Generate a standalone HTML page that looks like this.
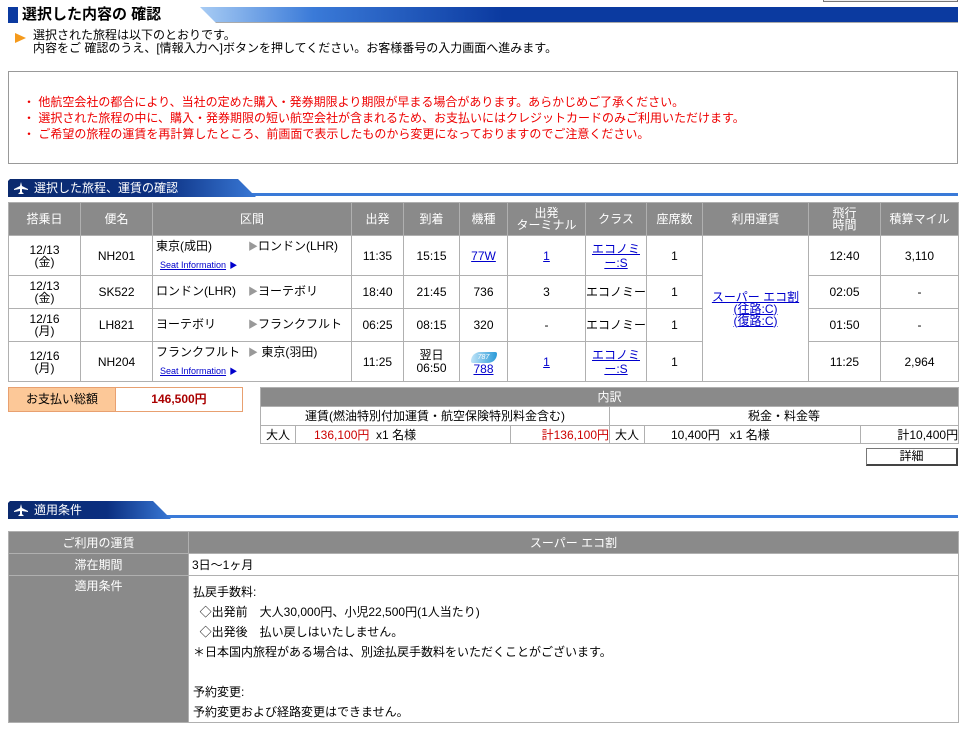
<!DOCTYPE html>
<html><head><meta charset="utf-8"><style>
*{margin:0;padding:0;box-sizing:border-box}
body{width:966px;height:731px;background:#fff;font-family:"Liberation Sans","Noto Sans CJK JP",sans-serif;font-size:12px;color:#000;position:relative;overflow:hidden}
.abs{position:absolute}
table{border-collapse:collapse;table-layout:fixed}
td,th{border:1px solid #b0b0b0;text-align:center;vertical-align:middle;font-weight:normal;line-height:14px}
th{background:#8a8a8a;color:#fff}
a{color:#00c;text-decoration:underline}
.red{color:#c00}
.sec{position:absolute;left:8px;height:18px;width:950px}
.sec .tab{position:absolute;left:0;top:0;height:18px;width:250px;background:linear-gradient(90deg,#0b2a6e 0%,#0b2f80 60%,#3a7ad8 100%);clip-path:polygon(0 2px,2px 0,230px 0,248px 18px,0 18px);color:#fff;font-size:12px;line-height:18px;padding-left:26px}
.sec .line{position:absolute;left:240px;right:0;top:14px;height:3px;background:#3a7ad8}
.plane{position:absolute;left:6px;top:3px;width:14px;height:12px}
.p1{display:inline-block;width:92px;white-space:nowrap}
.rt{text-align:left;padding-left:3px;white-space:nowrap}
.ar{color:#999;font-size:10px}
</style></head><body>
<div class="abs" style="left:823px;top:0;width:135px;height:2px;border:1px solid #777;border-top:none;background:#eee"></div>
<div class="abs" style="left:8px;top:7px;width:10px;height:16px;background:#0b3aa0"></div>
<div class="abs" style="left:22px;top:6px;font-size:15px;font-weight:bold;line-height:18px">選択した内容の 確認</div>
<div class="abs" style="left:200px;top:7px;width:758px;height:16px;background:linear-gradient(90deg,#a8ccf4 0%,#3a7ad8 15%,#0b3aa0 40%,#0b3aa0 100%);clip-path:polygon(0 0,100% 0,100% 100%,16px 100%);border-bottom:1px solid #aaa"></div>
<div class="abs" style="left:15px;top:33px;width:0;height:0;border-top:5px solid transparent;border-bottom:5px solid transparent;border-left:11px solid #f59a1c"></div>
<div class="abs" style="left:33px;top:29px;line-height:13px">選択された旅程は以下のとおりです。<br>内容をご 確認のうえ、[情報入力へ]ボタンを押してください。お客様番号の入力画面へ進みます。</div>
<div class="abs" style="left:8px;top:71px;width:950px;height:93px;border:1px solid #999;padding:22px 0 0 14px;color:#e00;line-height:16px">・ 他航空会社の都合により、当社の定めた購入・発券期限より期限が早まる場合があります。あらかじめご了承ください。<br>・ 選択された旅程の中に、購入・発券期限の短い航空会社が含まれるため、お支払いにはクレジットカードのみご利用いただけます。<br>・ ご希望の旅程の運賃を再計算したところ、前画面で表示したものから変更になっておりますのでご注意ください。</div>

<div class="sec" style="top:179px"><div class="line"></div><div class="tab"><svg class="plane" viewBox="0 0 14 12"><path d="M7 0L8 4L14 7L14 8L8 7L8 10L10 12L4 12L6 10L6 7L0 8L0 7L6 4Z" fill="#fff"/></svg>選択した旅程、運賃の確認</div></div>

<table class="abs" style="left:8px;top:202px;width:950px">
<colgroup><col style="width:72px"><col style="width:72px"><col style="width:199px"><col style="width:52px"><col style="width:56px"><col style="width:48px"><col style="width:78px"><col style="width:61px"><col style="width:56px"><col style="width:106px"><col style="width:72px"><col style="width:78px"></colgroup>
<tr style="height:33px"><th>搭乗日</th><th>便名</th><th>区間</th><th>出発</th><th>到着</th><th>機種</th><th style="line-height:12px">出発<br>ターミナル</th><th>クラス</th><th>座席数</th><th>利用運賃</th><th style="line-height:12px">飛行<br>時間</th><th>積算マイル</th></tr>
<tr style="height:40px"><td style="line-height:12px">12/13<br>(金)</td><td>NH201</td><td class="rt" style="line-height:16px"><span class="p1">東京(成田)</span><span class="ar">▶</span>ロンドン(LHR)<br><a style="font-size:9px;margin-left:4px">Seat Information</a> <span style="font-size:8px;color:#00c">▶</span></td><td>11:35</td><td>15:15</td><td><a>77W</a></td><td><a>1</a></td><td><a style="line-height:13px">エコノミ<br>ー:S</a></td><td>1</td><td rowspan="4" style="line-height:12px"><a>スーパー エコ割<br>(往路:C)<br>(復路:C)</a></td><td>12:40</td><td>3,110</td></tr>
<tr style="height:33px"><td style="line-height:12px">12/13<br>(金)</td><td>SK522</td><td class="rt"><span class="p1">ロンドン(LHR)</span><span class="ar">▶</span>ヨーテボリ</td><td>18:40</td><td>21:45</td><td>736</td><td>3</td><td>エコノミー</td><td>1</td><td>02:05</td><td>-</td></tr>
<tr style="height:33px"><td style="line-height:12px">12/16<br>(月)</td><td>LH821</td><td class="rt"><span class="p1">ヨーテボリ</span><span class="ar">▶</span>フランクフルト</td><td>06:25</td><td>08:15</td><td>320</td><td>-</td><td>エコノミー</td><td>1</td><td>01:50</td><td>-</td></tr>
<tr style="height:40px"><td style="line-height:12px">12/16<br>(月)</td><td>NH204</td><td class="rt" style="line-height:16px"><span class="p1">フランクフルト</span><span class="ar">▶</span> 東京(羽田)<br><a style="font-size:9px;margin-left:4px">Seat Information</a> <span style="font-size:8px;color:#00c">▶</span></td><td>11:25</td><td style="line-height:13px">翌日<br>06:50</td><td style="line-height:12px"><span style="display:inline-block;width:26px;height:11px;background:linear-gradient(90deg,#bfe4f8,#2a9ad8);border-radius:10px 2px 10px 2px;color:#fff;font-size:7px;font-style:italic;line-height:11px">787</span><br><a>788</a></td><td><a>1</a></td><td><a style="line-height:13px">エコノミ<br>ー:S</a></td><td>1</td><td>11:25</td><td>2,964</td></tr>
</table>

<div class="abs" style="left:8px;top:387px;width:235px;height:25px;border:1px solid #e8a070;display:flex">
<div style="width:107px;background:#fcc898;text-align:center;line-height:23px;border-right:1px solid #e8a070">お支払い総額</div>
<div style="flex:1;text-align:center;line-height:23px;color:#a00;font-weight:bold">146,500円</div></div>

<table class="abs" style="left:260px;top:387px;width:698px">
<colgroup><col style="width:35px"><col style="width:215px"><col style="width:99px"><col style="width:35px"><col style="width:216px"><col style="width:98px"></colgroup>
<tr style="height:19px"><th colspan="6">内訳</th></tr>
<tr style="height:19px"><td colspan="3">運賃(燃油特別付加運賃・航空保険特別料金含む)</td><td colspan="3">税金・料金等</td></tr>
<tr style="height:18px"><td>大人</td><td style="text-align:left;padding-left:18px"><span class="red">136,100円</span> &nbsp;x1 名様</td><td class="red" style="text-align:right">計136,100円</td><td>大人</td><td style="text-align:left;padding-left:26px">10,400円 &nbsp;&nbsp;x1 名様</td><td style="text-align:right">計10,400円</td></tr>
</table>
<div class="abs" style="left:866px;top:448px;width:92px;height:18px;border:1px solid #777;border-right:2px solid #444;border-bottom:2px solid #444;background:#fff;text-align:center;line-height:15px">詳細</div>

<div class="sec" style="top:501px"><div class="line" style="left:150px"></div><div class="tab" style="width:165px;clip-path:polygon(0 2px,2px 0,145px 0,163px 18px,0 18px)"><svg class="plane" viewBox="0 0 14 12"><path d="M7 0L8 4L14 7L14 8L8 7L8 10L10 12L4 12L6 10L6 7L0 8L0 7L6 4Z" fill="#fff"/></svg>適用条件</div></div>

<table class="abs" style="left:8px;top:531px;width:950px">
<colgroup><col style="width:180px"><col style="width:770px"></colgroup>
<tr style="height:22px"><th>ご利用の運賃</th><th>スーパー エコ割</th></tr>
<tr style="height:22px"><th>滞在期間</th><td style="text-align:left;padding-left:3px">3日～1ヶ月</td></tr>
<tr style="height:147px"><th style="vertical-align:top;padding-top:3px">適用条件</th><td style="text-align:left;vertical-align:top;padding:6px 0 0 4px;line-height:20px">払戻手数料:<br>&nbsp;&nbsp;◇出発前　大人30,000円、小児22,500円(1人当たり)<br>&nbsp;&nbsp;◇出発後　払い戻しはいたしません。<br>＊日本国内旅程がある場合は、別途払戻手数料をいただくことがございます。<br><br>予約変更:<br>予約変更および経路変更はできません。</td></tr>
</table>
</body></html>
